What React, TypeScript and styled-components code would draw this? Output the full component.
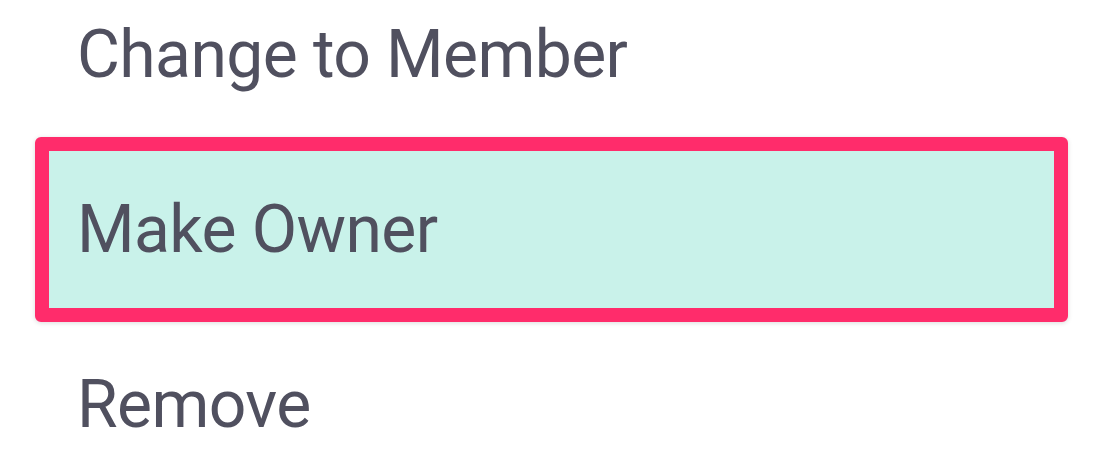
import React from "react";
import styled, { createGlobalStyle } from "styled-components";

const GlobalStyle = createGlobalStyle`
  html, body { margin: 0; padding: 0; background: #ffffff; }
  body { width: 1102px; height: 468px; overflow: hidden; font-family: Roboto, "Noto Sans", sans-serif; }
`;

const Menu = styled.ul`
  list-style: none;
  margin: -24px 0 0 0;
  padding: 0;
  display: flex;
  flex-direction: column;
  gap: 18px;
`;

const Item = styled.li<{ $active?: boolean }>`
  height: 157px;
  display: flex;
  align-items: center;
  padding-left: 28px;
  font-size: 66px;
  letter-spacing: -0.6px;
  line-height: 1;
  color: #50505f;
  margin: ${(p) => (p.$active ? "0 34px 0 35px" : "0 48px 0 49px")};
  border: ${(p) => (p.$active ? "14px solid #ff2c6b" : "none")};
  border-radius: ${(p) => (p.$active ? "6px" : "0")};
  background: ${(p) => (p.$active ? "#c9f2ea" : "transparent")};
  box-shadow: ${(p) => (p.$active ? "0 1px 5px rgba(0,0,0,0.14)" : "none")};
  box-sizing: content-box;
  ${(p) => (p.$active ? "margin-top: -14px; margin-bottom: -14px;" : "")}
`;

export default function App() {
  return (
    <>
      <GlobalStyle />
      <Menu>
        <Item>Change to Member</Item>
        <Item $active>Make Owner</Item>
        <Item>Remove</Item>
      </Menu>
    </>
  );
}
